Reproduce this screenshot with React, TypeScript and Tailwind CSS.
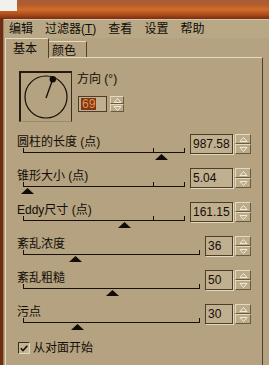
import React from "react";

type Row = { label: React.ReactNode; value: string; thumb: number; wide: boolean };

const rows: Row[] = [
  { label: "圆柱的长度 (点)", value: "987.58", thumb: 161, wide: true },
  { label: "锥形大小 (点)", value: "5.04", thumb: 27, wide: true },
  { label: "Eddy尺寸 (点)", value: "161.15", thumb: 124, wide: true },
  { label: "紊乱浓度", value: "36", thumb: 75, wide: false },
  { label: "紊乱粗糙", value: "50", thumb: 112, wide: false },
  { label: "污点", value: "30", thumb: 77, wide: false },
];

const menu = ["编辑", "过滤器", "查看", "设置", "帮助"];

const Arrow = ({ down }: { down?: boolean }) => (
  <svg width="9" height="5" viewBox="0 0 9 5">
    <path
      d={down ? "M1 0.5 H8 L4.5 4.5 Z" : "M4.5 0.5 L8 4.5 H1 Z"}
      fill="none"
      stroke="#f2ead8"
      strokeWidth="1"
    />
  </svg>
);

const Spinner = ({ small }: { small?: boolean }) => (
  <div className={small ? "flex h-[16px] w-[14px] flex-col" : "flex h-[20px] w-[16px] flex-col"}>
    <div className="flex flex-1 items-center justify-center border border-t-[#e4dac4] border-l-[#e4dac4] border-b-[#6a5a40] border-r-[#6a5a40] bg-[#bcab89]">
      <Arrow />
    </div>
    <div className="flex flex-1 items-center justify-center border border-t-[#e4dac4] border-l-[#e4dac4] border-b-[#6a5a40] border-r-[#6a5a40] bg-[#bcab89]">
      <Arrow down />
    </div>
  </div>
);

const Slider = ({ wide, thumb }: { wide: boolean; thumb: number }) => (
  <div
    className={
      wide
        ? "relative ml-[6px] h-[4px] w-[162px] border-b border-[#17110a]"
        : "relative ml-[6px] h-[4px] w-[177px] border-b border-[#17110a]"
    }
  >
    <div className="absolute bottom-[-1px] left-0 h-[5px] w-px bg-[#17110a]" />
    <div className="absolute bottom-[-1px] right-0 h-[5px] w-px bg-[#17110a]" />
    {wide && <div className="absolute bottom-[-1px] left-[130px] h-[5px] w-px bg-[#17110a]" />}
    {/* thumb */}
    <svg className="absolute top-[5px]" style={{ left: thumb - 23 - 6 }} width="13" height="6" viewBox="0 0 13 6">
      <path d="M6.5 0 L13 6 H0 Z" fill="#120c06" />
    </svg>
  </div>
);

const Dial = () => (
  <div className="h-[51px] w-[53px] border-l-2 border-t-2 border-r border-b border-l-[#241a10] border-t-[#241a10] border-r-[#3a2e20] border-b-[#9c8c6c]">
    <svg width="50" height="48" viewBox="0 0 50 48">
      <circle cx="25" cy="24" r="21" fill="none" stroke="#120c06" strokeWidth="1.2" />
      <line x1="25" y1="25" x2="31.5" y2="7" stroke="#120c06" strokeWidth="1.3" />
      <circle cx="31.8" cy="6.3" r="3.2" fill="#120c06" />
    </svg>
  </div>
);

export default function App() {
  return (
    <div className="flex h-[365px] w-[269px] flex-col overflow-hidden bg-[#b4a280] font-['Liberation_Sans','Noto_Sans_CJK_SC',sans-serif] text-[12px] leading-[14px] text-[#120d07]">
      {/* wooden title strip */}
      <div className="flex h-[19px] shrink-0 bg-[linear-gradient(180deg,#a0603c_0%,#b85a28_25%,#cc6e2c_50%,#ac4a1a_78%,#7a2c10_100%)]">
        <div className="h-[11px] w-[17px] bg-[#f2f0ec]" />
      </div>

      <div className="flex flex-1">
        <div className="w-[4px] border-r border-[#a47a58] bg-[#6c2e12]" />

        <div className="flex flex-1 flex-col">
          {/* menu bar */}
          <div className="flex h-[19px] items-center gap-[12px] border-t border-[#d2c4a4] bg-[#b9a886] pl-[5px]">
            {menu.map((m) =>
              m === "过滤器" ? (
                <span key={m}>
                  过滤器(<span className="underline">T</span>)
                </span>
              ) : (
                <span key={m}>{m}</span>
              )
            )}
          </div>

          {/* tabs */}
          <div className="flex h-[19px] items-end pl-[1px]">
            <div className="relative z-10 mb-[-1px] flex h-[20px] w-[44px] items-center border-l border-t border-r border-l-[#e6dcc4] border-t-[#e6dcc4] border-r-[#4e402a] bg-[#b4a280] pl-[7px]">
              基本
            </div>
            <div className="flex h-[16px] w-[38px] items-center border-t border-r border-t-[#e6dcc4] border-r-[#4e402a] pl-[3px] pt-[2px]">
              颜色
            </div>
          </div>

          {/* panel */}
          <div className="ml-[1px] mr-[6px] flex flex-1 flex-col border-l border-t border-r border-l-[#e6dcc4] border-t-[#e6dcc4] border-r-[#4e402a] pl-[11px] pr-[11px]">
            <div className="ml-[2px] mt-[13px] flex">
              <Dial />
              <div className="ml-[5px] flex flex-col">
                <div className="mt-[1px]">方向 (°)</div>
                <div className="ml-[1px] mt-[10px] flex gap-[3px]">
                  <div className="flex h-[16px] w-[29px] items-center border border-[#4e3e28] bg-[#c0b090] pl-[2px]">
                    <span className="bg-[#7c3814] px-[1px] text-[12px] leading-[12px] text-[#f09050]">69</span>
                  </div>
                  <Spinner small />
                </div>
              </div>
            </div>

            <div className="mt-[12px] flex flex-col">
              {rows.map((r) => (
                <div key={r.value} className="flex h-[34px]">
                  <div className="flex flex-1 flex-col">
                    <div className="mt-[1px] h-[14px] whitespace-nowrap">{r.label}</div>
                    <Slider wide={r.wide} thumb={r.thumb} />
                  </div>
                  <div className="flex gap-[2px]">
                    <div
                      className={
                        r.wide
                          ? "h-[20px] w-[43px] border border-[#4e3e28] bg-[#c0b090] pl-[2px] text-[12px] leading-[18px] shadow-[1px_1px_0_#e2d8c2]"
                          : "h-[20px] w-[28px] border border-[#4e3e28] bg-[#c0b090] pl-[2px] text-[12px] leading-[18px] shadow-[1px_1px_0_#e2d8c2]"
                      }
                    >
                      {r.value}
                    </div>
                    <Spinner />
                  </div>
                </div>
              ))}
            </div>

            <div className="ml-[1px] mt-[3px] flex items-center gap-[3px]">
              <div className="flex h-[12px] w-[12px] items-center justify-center border border-t-[#3a2e1e] border-l-[#3a2e1e] border-b-[#e2d8c2] border-r-[#e2d8c2] bg-[#c4b494]">
                <svg width="8" height="7" viewBox="0 0 8 7">
                  <path d="M0.8 3.2 L3 5.6 L7.3 0.8" fill="none" stroke="#1a120a" strokeWidth="1.6" />
                </svg>
              </div>
              <span>从对面开始</span>
            </div>
          </div>
        </div>
      </div>
    </div>
  );
}
